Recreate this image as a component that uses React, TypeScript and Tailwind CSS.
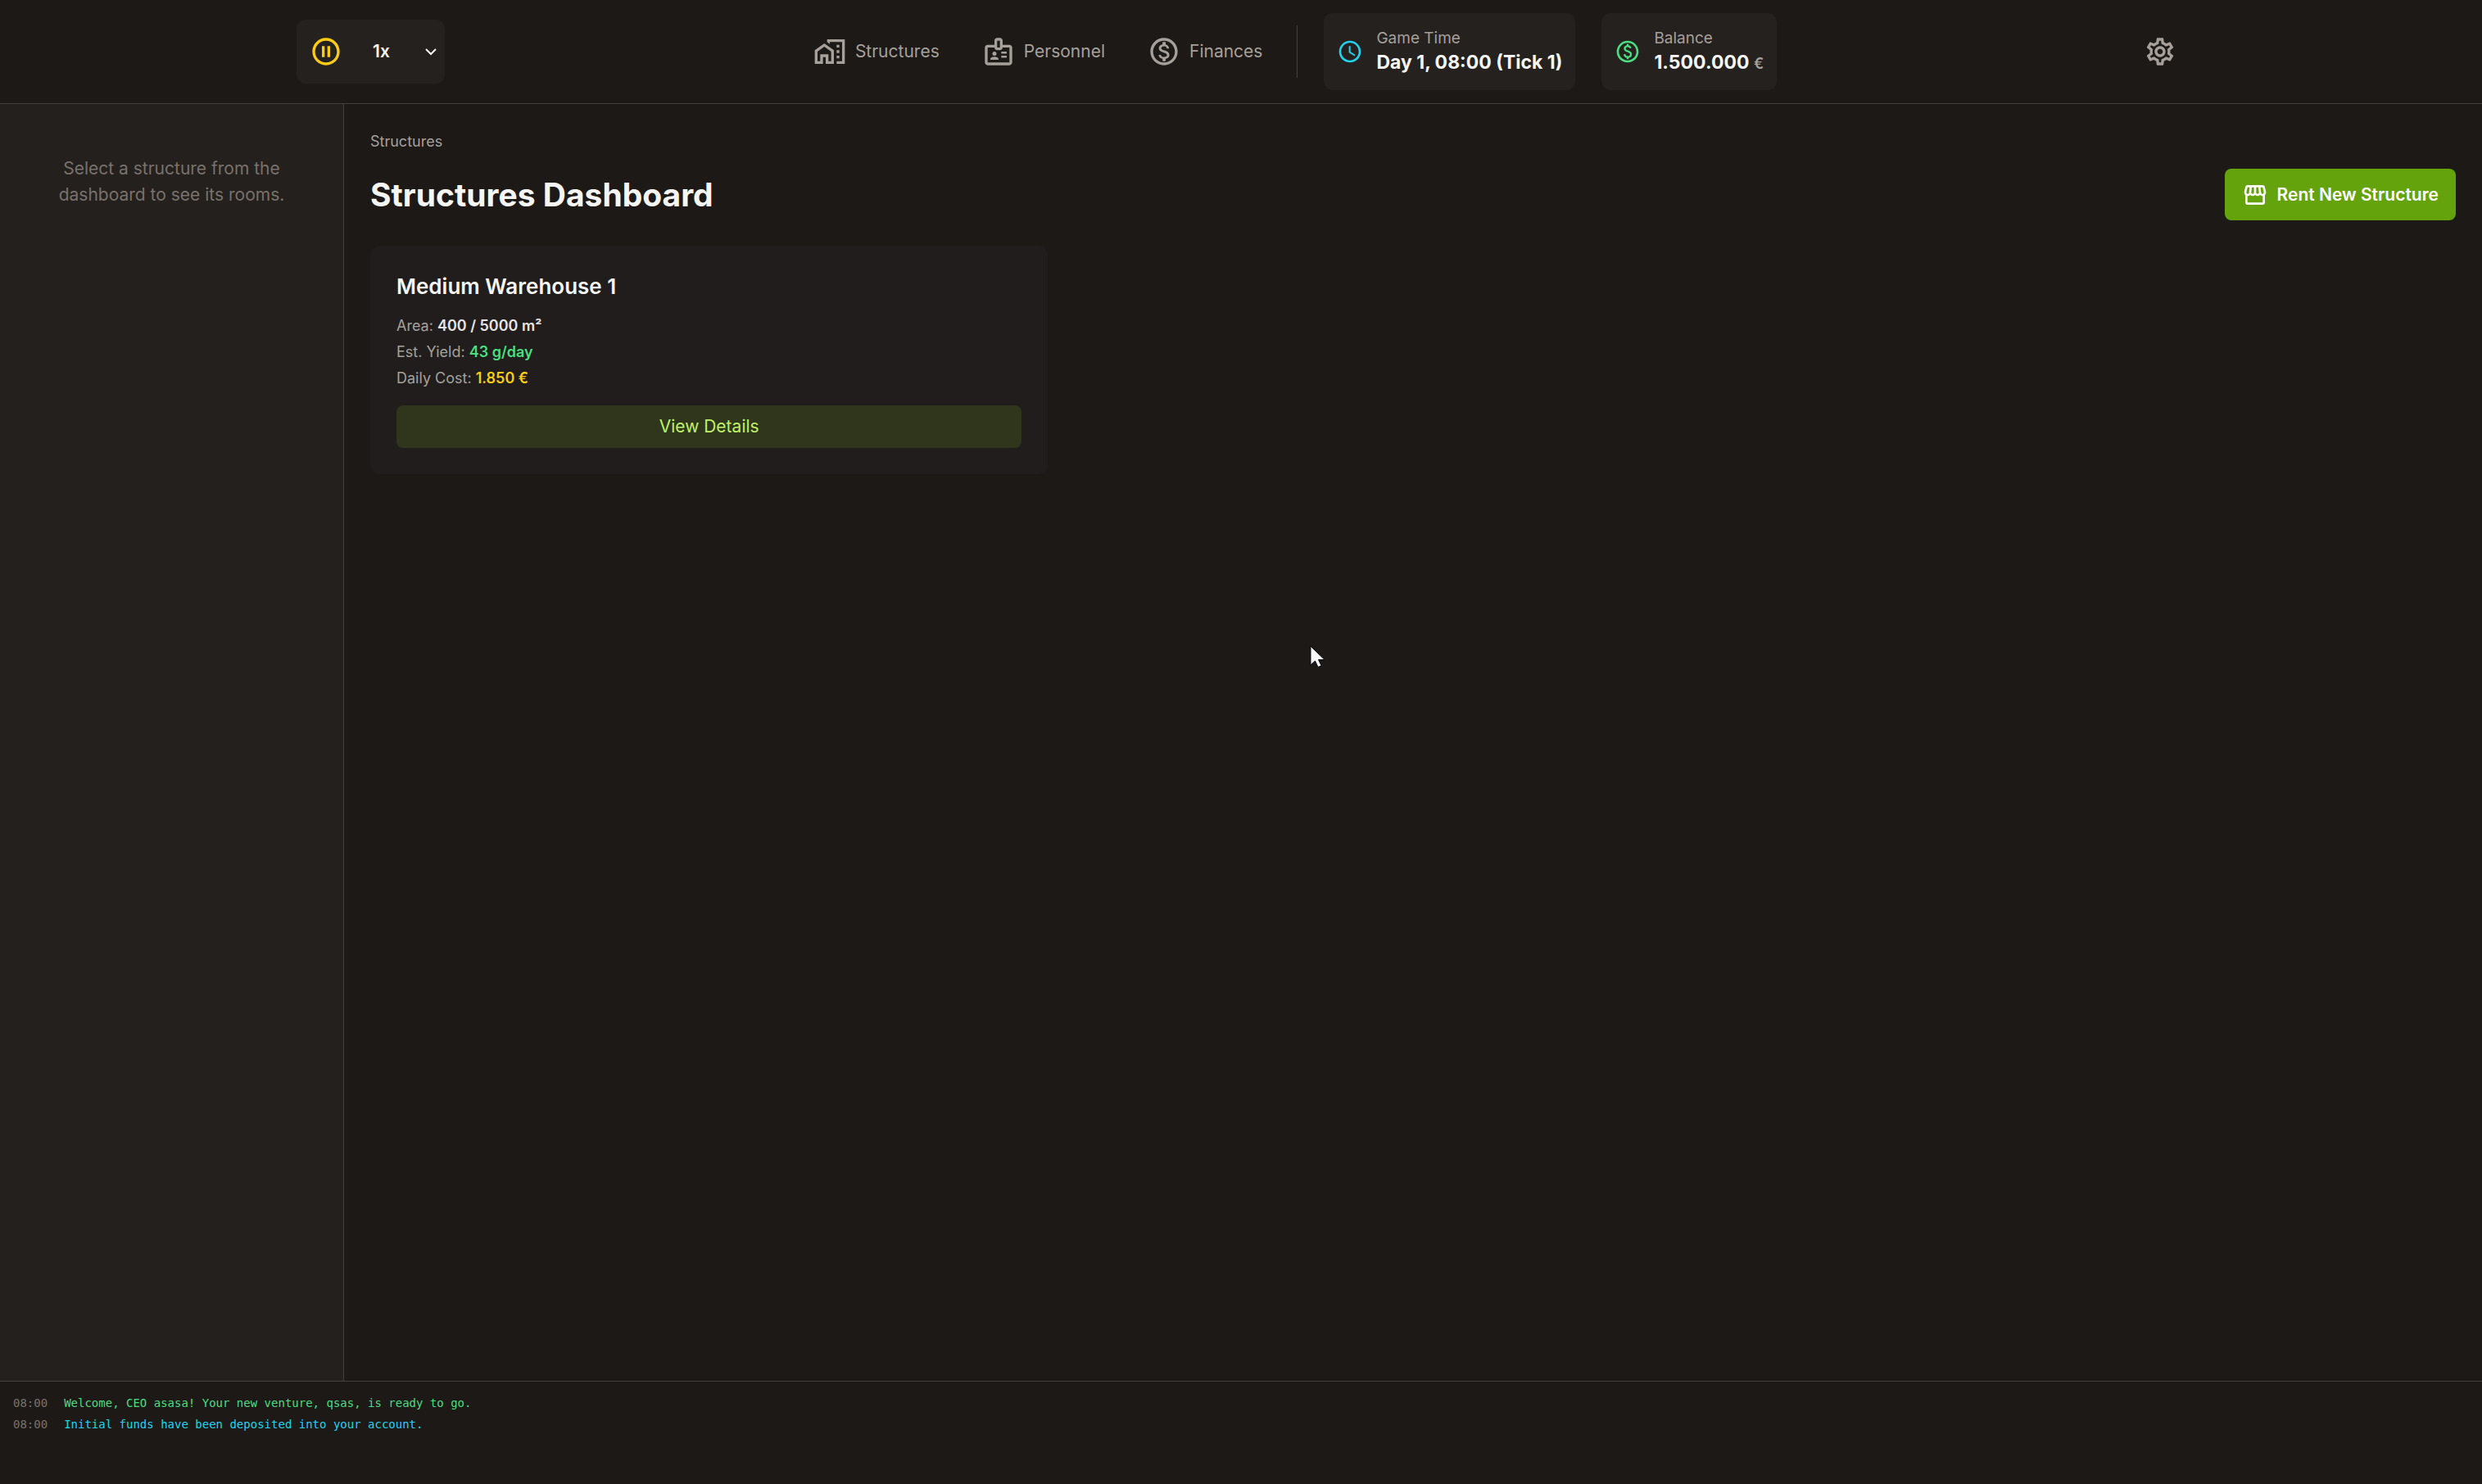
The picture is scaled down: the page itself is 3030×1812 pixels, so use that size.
import React, { useState } from "react";
import {
  MdOutlineBadge,
  MdOutlineHomeWork,
  MdOutlineMonetizationOn,
  MdOutlinePauseCircle,
  MdOutlineSchedule,
  MdOutlineSettings,
  MdOutlineStorefront,
  MdOutlinePaid,
} from "react-icons/md";

const navItems = [
  { label: "Structures", Icon: MdOutlineHomeWork },
  { label: "Personnel", Icon: MdOutlineBadge },
  { label: "Finances", Icon: MdOutlineMonetizationOn },
];

const logEntries = [
  { time: "08:00", text: "Welcome, CEO asasa! Your new venture, qsas, is ready to go.", color: "text-[#4ade80]" },
  { time: "08:00", text: "Initial funds have been deposited into your account.", color: "text-[#22d3ee]" },
];

function SpeedControl() {
  const [speed, setSpeed] = useState("1x");
  return (
    <div className="flex h-[78px] items-center rounded-[11px] bg-[#24211f] pl-4">
      <button type="button" aria-label="Pause" className="text-[#facc15]">
        <MdOutlinePauseCircle size={40} />
      </button>
      <div className="relative ml-4 flex items-center">
        <select
          aria-label="Game speed"
          value={speed}
          onChange={(e) => setSpeed(e.target.value)}
          className="h-14 w-[109px] appearance-none bg-transparent pl-[21px] text-[21px] font-semibold text-stone-100"
        >
          <option>1x</option>
          <option>2x</option>
          <option>5x</option>
        </select>
        <svg
          className="pointer-events-none absolute right-[10px] h-[9px] w-[14px] text-stone-100"
          viewBox="0 0 14 9"
          fill="none"
          stroke="currentColor"
          strokeWidth="2"
          aria-hidden="true"
        >
          <path d="M1 1l6 6 6-6" />
        </svg>
      </div>
    </div>
  );
}

function Stat({ icon, label, children }: { icon: React.ReactNode; label: string; children: React.ReactNode }) {
  return (
    <div className="flex h-[94px] items-center gap-4 rounded-[11px] bg-[#24211f] px-4">
      {icon}
      <div>
        <div className="text-[19px] leading-[27px] text-stone-400">{label}</div>
        <div className="text-[23px] leading-[33px] font-bold text-stone-100">{children}</div>
      </div>
    </div>
  );
}

function Header() {
  return (
    <header className="flex h-[127px] items-center justify-between border-b border-stone-700 px-[11.95%]">
      <SpeedControl />
      <div className="mr-2 flex items-center gap-8">
        <div className="flex items-center">
          <nav className="flex gap-2.5">
            {navItems.map(({ label, Icon }) => (
              <button key={label} type="button" className="flex items-center gap-[11px] px-[21px] text-[21px] leading-8 text-stone-400">
                <Icon size={40} />
                {label}
              </button>
            ))}
          </nav>
          <div className="ml-[21px] h-16 w-px bg-stone-700" />
        </div>
        <Stat label="Game Time" icon={<MdOutlineSchedule size={32} className="text-[#22d3ee]" />}>
          Day 1, 08:00 (Tick 1)
        </Stat>
        <Stat label="Balance" icon={<MdOutlinePaid size={32} className="text-[#4ade80]" />}>
          1.500.000 <span className="text-[18px] leading-none font-semibold text-stone-400">€</span>
        </Stat>
      </div>
      <button type="button" aria-label="Settings" className="p-[11px] text-stone-400">
        <MdOutlineSettings size={40} />
      </button>
    </header>
  );
}

function StructureCard() {
  return (
    <article className="rounded-[11px] bg-[#201d1c] p-8">
      <h2 className="text-[26px] leading-[36px] font-semibold text-stone-100">Medium Warehouse 1</h2>
      <div className="mt-4 flex flex-col gap-[5px] text-[18px] leading-[27px] text-stone-400">
        <p>Area: <span className="font-semibold text-stone-200">400 / 5000 m²</span></p>
        <p>Est. Yield: <span className="font-semibold text-[#4ade80]">43 g/day</span></p>
        <p>Daily Cost: <span className="font-semibold text-[#facc15]">1.850 €</span></p>
      </div>
      <button type="button" className="mt-5 h-[52px] w-full rounded-lg bg-[#2f361b] text-[21px] text-[#bef264]">
        View Details
      </button>
    </article>
  );
}

export default function App() {
  return (
    <div className="relative flex min-h-screen flex-col bg-stone-900 font-['Inter',sans-serif] text-stone-100">
      <Header />
      <div className="flex flex-1">
        <aside className="w-[420px] shrink-0 border-r border-stone-700 bg-[#24201d] px-16 pt-[63px] text-center text-[21px] leading-8 text-stone-500">
          <p>Select a structure from the dashboard to see its rooms.</p>
        </aside>
        <main className="flex-1 px-8 pt-8">
          <nav aria-label="Breadcrumb" className="text-[18px] leading-[27px] text-stone-400">
            <a href="#structures">Structures</a>
          </nav>
          <div className="mt-5 mb-[31px] flex items-center justify-between">
            <h1 className="text-[39px] leading-[48px] font-bold">Structures Dashboard</h1>
            <button type="button" className="flex h-[63px] items-center gap-[11px] rounded-lg bg-[#65a30d] px-[21px] text-[21px] font-semibold text-white">
              <MdOutlineStorefront size={32} />
              Rent New Structure
            </button>
          </div>
          <div className="grid grid-cols-3 gap-8">
            <StructureCard />
          </div>
        </main>
      </div>
      <footer className="h-[126px] border-t border-stone-700 px-4 pt-[13px] font-['DejaVu_Sans_Mono','Liberation_Mono',monospace] text-[14px] leading-[26px]">
        {logEntries.map((entry) => (
          <p key={entry.text} className="flex gap-5">
            <span className="text-stone-500">{entry.time}</span>
            <span className={entry.color}>{entry.text}</span>
          </p>
        ))}
      </footer>
      <svg className="pointer-events-none absolute top-[788px] left-[1599px] h-[28px] w-[19px]" viewBox="0 0 19 28" aria-hidden="true">
        <path d="M1 1v23l5.500-5 3.500 7.500 4-1.800-3.500-7.200H18z" fill="#fff" stroke="#0c0a14" strokeWidth="1" />
      </svg>
    </div>
  );
}
